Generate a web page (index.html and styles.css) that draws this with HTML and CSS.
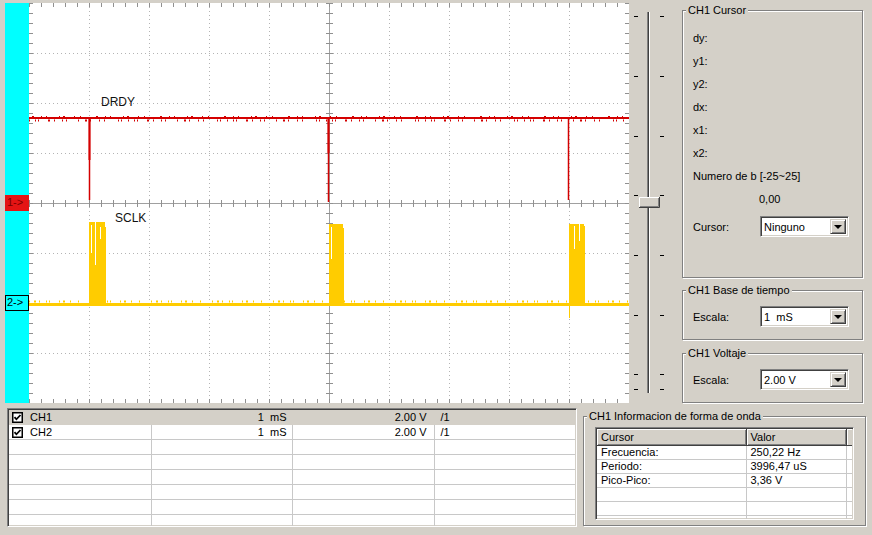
FILE: index.html
```html
<!DOCTYPE html>
<html lang="es">
<head>
    <meta charset="UTF-8">
    <meta name="viewport" content="width=device-width, initial-scale=1.0">
    <title>Osciloscopio</title>
    <link rel="stylesheet" href="styles.css">
</head>

<body>
    <div class="window">
        <div class="top">
            <!-- marcadores de canal -->
            <div class="rail">
                <span class="marker m1">1-&gt;</span>
                <span class="marker m2">2-&gt;</span>
            </div>

            <!-- pantalla -->
            <svg class="screen" width="600" height="400" viewBox="0 0 600 400">
                <rect width="600" height="400" fill="#fff"/>
                <g stroke="#b4b4b4" stroke-dasharray="1 3">
                    <path d="M60.5 0V400M120.5 0V400M180.5 0V400M240.5 0V400M360.5 0V400M420.5 0V400M480.5 0V400M540.5 0V400"/>
                    <path d="M0 50.5H600M0 100.5H600M0 150.5H600M0 250.5H600M0 300.5H600M0 350.5H600"/>
                </g>
                <g stroke="#a0a0a0">
                    <path d="M300.5 0V400M0 200.5H600"/>
                </g>
                <g stroke="#909090">
                    <path d="M0 200.5H600" stroke-width="7" stroke-dasharray="1 11"/>
                    <path d="M300.5 0V400" stroke-width="7" stroke-dasharray="1 9"/>
                    <path d="M0 2H600M0 398H600" stroke-width="4" stroke-dasharray="1 11"/>
                    <path d="M2 0V400M598 0V400" stroke-width="4" stroke-dasharray="1 9"/>
                </g>

                <!-- DRDY -->
                <g fill="none" stroke="#d40000">
                    <path d="M0 115H600" stroke-width="2"/>
                    <path d="M0 117.5H600" stroke-width="2" stroke-dasharray="1 5 1 2 1 9 2 4 1 7 1 3 1 11 1 6 2 3 1 8 1 4 1 13 1 2 1 6"/>
                    <path d="M3 113.5H600" stroke-dasharray="2 7 1 4 1 12 1 3 2 9 1 5 1 15"/>
                    <path d="M60.5 115V197M299.5 115V199M539.5 115V197" stroke-width="1.5"/>
                    <path d="M60.5 115V157M299.5 115V150" stroke-width="2"/>
                </g>

                <!-- SCLK -->
                <g fill="#ffcc00">
                    <rect x="0" y="300" width="600" height="3"/>
                    <rect x="60" y="219" width="17" height="82"/>
                    <rect x="300" y="221" width="15" height="80"/>
                    <rect x="540" y="221" width="16" height="80"/>
                </g>
                <g fill="none" stroke="#ffcc00">
                    <path d="M0 298.5H600" stroke-width="2" stroke-dasharray="1 4 2 3 1 6 1 2 1 9 1 3 2 5 1 7 1 11"/>
                    <path d="M540.5 300V315"/>
                </g>
                <g stroke="#fff">
                    <path d="M62.5 222V250M66.5 219V262M71.5 224V236M302.5 224V256M545.5 223V246M550.5 221V238"/>
                    <path d="M76.5 219V224M314.5 221V225M555.5 221V223"/>
                </g>

                <text class="trace-label" x="72" y="103">DRDY</text>
                <text class="trace-label" x="86" y="219">SCLK</text>
            </svg>

            <!-- barra de desplazamiento -->
            <svg class="trackbar" width="52" height="405" viewBox="0 0 52 405">
                <g fill="#000">
                    <rect x="5" y="16" width="4" height="1"/><rect x="31" y="16" width="4" height="1"/>
                    <rect x="5" y="76" width="4" height="1"/><rect x="31" y="76" width="4" height="1"/>
                    <rect x="5" y="136" width="4" height="1"/><rect x="31" y="136" width="4" height="1"/>
                    <rect x="5" y="195" width="4" height="1"/><rect x="31" y="195" width="4" height="1"/>
                    <rect x="5" y="255" width="4" height="1"/><rect x="31" y="255" width="4" height="1"/>
                    <rect x="5" y="315" width="4" height="1"/><rect x="31" y="315" width="4" height="1"/>
                    <rect x="5" y="374" width="4" height="1"/><rect x="31" y="374" width="4" height="1"/>
                    <rect x="5" y="389" width="4" height="1"/><rect x="31" y="389" width="4" height="1"/>
                </g>
                <rect x="18" y="12" width="1" height="381" fill="#808080"/>
                <rect x="19" y="12" width="1" height="381" fill="#404040"/>
                <rect x="20" y="12" width="1" height="381" fill="#fff"/>
                <rect x="10" y="197" width="21" height="11" fill="#d4d0c8"/>
                <path d="M10.5 207.5V197.5H30.5" fill="none" stroke="#fff"/>
                <path d="M10 207.5H30.5V197" fill="none" stroke="#404040"/>
                <path d="M11 206.5H29.5V198" fill="none" stroke="#808080"/>
            </svg>

            <div class="panels">
                <fieldset class="group group-cursor">
                    <legend>CH1 Cursor</legend>
                    <div class="group-body">
                        <div class="readout">dy:</div>
                        <div class="readout">y1:</div>
                        <div class="readout">y2:</div>
                        <div class="readout">dx:</div>
                        <div class="readout">x1:</div>
                        <div class="readout">x2:</div>
                        <div class="readout">Numero de b [-25~25]</div>
                        <div class="readout center">0,00</div>
                        <div class="field">
                            <label class="lbl">Cursor:</label>
                            <div class="combo"><span>Ninguno</span><i class="drop"></i></div>
                        </div>
                    </div>
                </fieldset>

                <fieldset class="group group-small">
                    <legend>CH1 Base de tiempo</legend>
                    <div class="group-body">
                        <div class="field">
                            <label class="lbl">Escala:</label>
                            <div class="combo"><span>1&nbsp; mS</span><i class="drop"></i></div>
                        </div>
                    </div>
                </fieldset>

                <fieldset class="group group-small">
                    <legend>CH1 Voltaje</legend>
                    <div class="group-body">
                        <div class="field">
                            <label class="lbl">Escala:</label>
                            <div class="combo"><span>2.00 V</span><i class="drop"></i></div>
                        </div>
                    </div>
                </fieldset>
            </div>
        </div>

        <div class="bottom">
            <div class="chlist">
                <table>
                    <colgroup>
                        <col style="width:142px"><col style="width:141px"><col style="width:142px"><col>
                    </colgroup>
                    <tr class="sel">
                        <td><span class="chk"><svg width="11" height="11" viewBox="0 0 11 11"><rect x="0.75" y="0.75" width="9.5" height="9.5" fill="#fff" stroke="#000" stroke-width="1.5"/><path d="M2.5 5.2L4.4 7.3L8.5 3" fill="none" stroke="#000" stroke-width="1.8"/></svg></span>CH1</td>
                        <td class="num">1&nbsp; mS</td>
                        <td class="num num-v">2.00 V</td>
                        <td class="div">/1</td>
                    </tr>
                    <tr>
                        <td><span class="chk"><svg width="11" height="11" viewBox="0 0 11 11"><rect x="0.75" y="0.75" width="9.5" height="9.5" fill="#fff" stroke="#000" stroke-width="1.5"/><path d="M2.5 5.2L4.4 7.3L8.5 3" fill="none" stroke="#000" stroke-width="1.8"/></svg></span>CH2</td>
                        <td class="num">1&nbsp; mS</td>
                        <td class="num num-v">2.00 V</td>
                        <td class="div">/1</td>
                    </tr>
                    <tr><td></td><td></td><td></td><td></td></tr>
                    <tr><td></td><td></td><td></td><td></td></tr>
                    <tr><td></td><td></td><td></td><td></td></tr>
                    <tr><td></td><td></td><td></td><td></td></tr>
                    <tr><td></td><td></td><td></td><td></td></tr>
                    <tr><td></td><td></td><td></td><td></td></tr>
                </table>
            </div>

            <fieldset class="group group-info">
                <legend>CH1 Informacion de forma de onda</legend>
                <div class="group-body">
                    <div class="infolist">
                        <table>
                            <colgroup>
                                <col style="width:149px"><col style="width:100px"><col>
                            </colgroup>
                            <tr><th>Cursor</th><th>Valor</th><th></th></tr>
                            <tr><td>Frecuencia:</td><td>250,22 Hz</td><td></td></tr>
                            <tr><td>Periodo:</td><td>3996,47 uS</td><td></td></tr>
                            <tr><td>Pico-Pico:</td><td>3,36 V</td><td></td></tr>
                            <tr><td></td><td></td><td></td></tr>
                            <tr><td></td><td></td><td></td></tr>
                            <tr><td></td><td></td><td></td></tr>
                        </table>
                    </div>
                </div>
            </fieldset>
        </div>
    </div>
</body>
</html>
```

FILE: styles.css
```css
body {
    margin     : 0;
    background : #d4d0c8;
    font-family: "Liberation Sans", Arial, sans-serif;
    font-size  : 11px;
    color      : #000;
}

.window {
    width   : 872px;
    height  : 535px;
    overflow: hidden;
}

/* parte superior */
.top {
    display     : flex;
    height      : 405px;
    padding-left: 5px;
}

.rail {
    position   : relative;
    width      : 24px;
    height     : 400px;
    margin-top : 3px;
    background : #00ffff;
}

.marker {
    position   : absolute;
    left       : 0;
    width      : 24px;
    height     : 16px;
    box-sizing : border-box;
    line-height: 15px;
    padding-left: 2px;
    font-size  : 11px;
}

.m1 {
    top       : 192px;
    background: #e41414;
    color     : #7a0000;
}

.m2 {
    top   : 292px;
    border: 1px solid #000;
    line-height: 13px;
    padding-left: 1px;
}

.screen {
    display   : block;
    margin-top: 3px;
}

.trace-label {
    font-family: "Liberation Sans", Arial, sans-serif;
    font-size  : 12px;
    fill       : #111;
}

.trackbar {
    display: block;
}

.panels {
    width      : 181px;
    margin-left: 1px;
    padding-top: 4px;
}

/* group box */
.group {
    margin    : 0;
    padding   : 0;
    box-sizing: border-box;
    border    : 1px solid #808080;
    box-shadow: inset 1px 1px 0 #fff, 1px 1px 0 #fff;
    min-width : 0;
}

.group legend {
    margin-left: 3px;
    padding    : 0 2px;
    line-height: 13px;
    background : #d4d0c8;
}

.group-body {
    padding: 0 10px;
}

.group-cursor {
    height: 274px;
}

.group-cursor .group-body {
    padding-top: 10px;
}

.group-small {
    height    : 56px;
    margin-top: 6px;
}

.group-small + .group-small {
    margin-top: 7px;
}

.group-small .group-body {
    padding-top: 9px;
}

.readout {
    height     : 23px;
    line-height: 23px;
}

.center {
    padding-left: 66px;
}

.field {
    display    : flex;
    align-items: center;
}

.group-cursor .field {
    margin-top: 5px;
}

.lbl {
    width: 67px;
}

.combo {
    display    : flex;
    width      : 89px;
    height     : 21px;
    box-sizing : border-box;
    padding    : 2px;
    background : #fff;
    border     : 1px solid;
    border-color: #808080 #fff #fff #808080;
    box-shadow : inset 1px 1px 0 #404040, inset -1px -1px 0 #d4d0c8;
}

.combo span {
    flex       : 1;
    line-height: 16px;
    padding-left: 1px;
    white-space: nowrap;
}

.drop {
    display    : flex;
    align-items: center;
    justify-content: center;
    width      : 16px;
    height     : 15px;
    box-sizing : border-box;
    background : #d4d0c8;
    border     : 1px solid;
    border-color: #d4d0c8 #404040 #404040 #d4d0c8;
    box-shadow : inset 1px 1px 0 #fff, inset -1px -1px 0 #808080;
}

.drop::after {
    content     : "";
    border-left : 4px solid transparent;
    border-right: 4px solid transparent;
    border-top  : 4px solid #000;
    margin-top  : 1px;
}

/* parte inferior */
.bottom {
    display     : flex;
    gap         : 6px;
    padding-top : 3px;
    padding-left: 7px;
}

.chlist {
    width      : 570px;
    height     : 119px;
    box-sizing : border-box;
    padding    : 1px;
    overflow   : hidden;
    background : #fff;
    border     : 1px solid;
    border-color: #808080 #fff #fff #808080;
    box-shadow : inset 1px 1px 0 #404040, inset -1px -1px 0 #d4d0c8;
}

table {
    width          : 100%;
    border-collapse: collapse;
    table-layout   : fixed;
}

.chlist td {
    height       : 14px;
    padding      : 0;
    line-height  : 14px;
    white-space  : nowrap;
    border-right : 1px solid #c8c8c8;
    border-bottom: 1px solid #c8c8c8;
}

.chlist td:last-child {
    border-right: none;
}

.chlist .sel td {
    background  : #d4d0c8;
    border-color: #d4d0c8;
}

.chk {
    display       : inline-block;
    width         : 11px;
    height        : 11px;
    margin        : 0 7px 0 3px;
    vertical-align: -2px;
}

.chk svg {
    display: block;
}

.num {
    text-align   : right;
    padding-right: 5px !important;
}

.num-v {
    padding-right: 7px !important;
}

.div {
    padding-left: 6px !important;
}

.group-info {
    width     : 283px;
    height    : 116px;
    margin-top: 2px;
}

.group-info .group-body {
    padding: 4px 0 0 11px;
}

.infolist {
    width      : 259px;
    height     : 93px;
    box-sizing : border-box;
    padding    : 1px;
    overflow   : hidden;
    background : #fff;
    border     : 1px solid;
    border-color: #808080 #fff #fff #808080;
    box-shadow : inset 1px 1px 0 #404040, inset -1px -1px 0 #d4d0c8;
}

.infolist th {
    height       : 16px;
    padding      : 0 0 0 4px;
    text-align   : left;
    font-weight  : normal;
    background   : #d4d0c8;
    border-right : 1px solid #404040;
    border-bottom: 1px solid #404040;
    box-shadow   : inset 1px 1px 0 #fff, inset -1px -1px 0 #808080;
}

.infolist th:last-child {
    border-right: none;
    box-shadow  : inset 1px 1px 0 #fff;
}

.infolist td {
    height       : 13px;
    padding      : 0 0 0 4px;
    line-height  : 13px;
    white-space  : nowrap;
    border-right : 1px solid #c8c8c8;
    border-bottom: 1px solid #c8c8c8;
}

.infolist td:last-child {
    border-right: none;
}
```
